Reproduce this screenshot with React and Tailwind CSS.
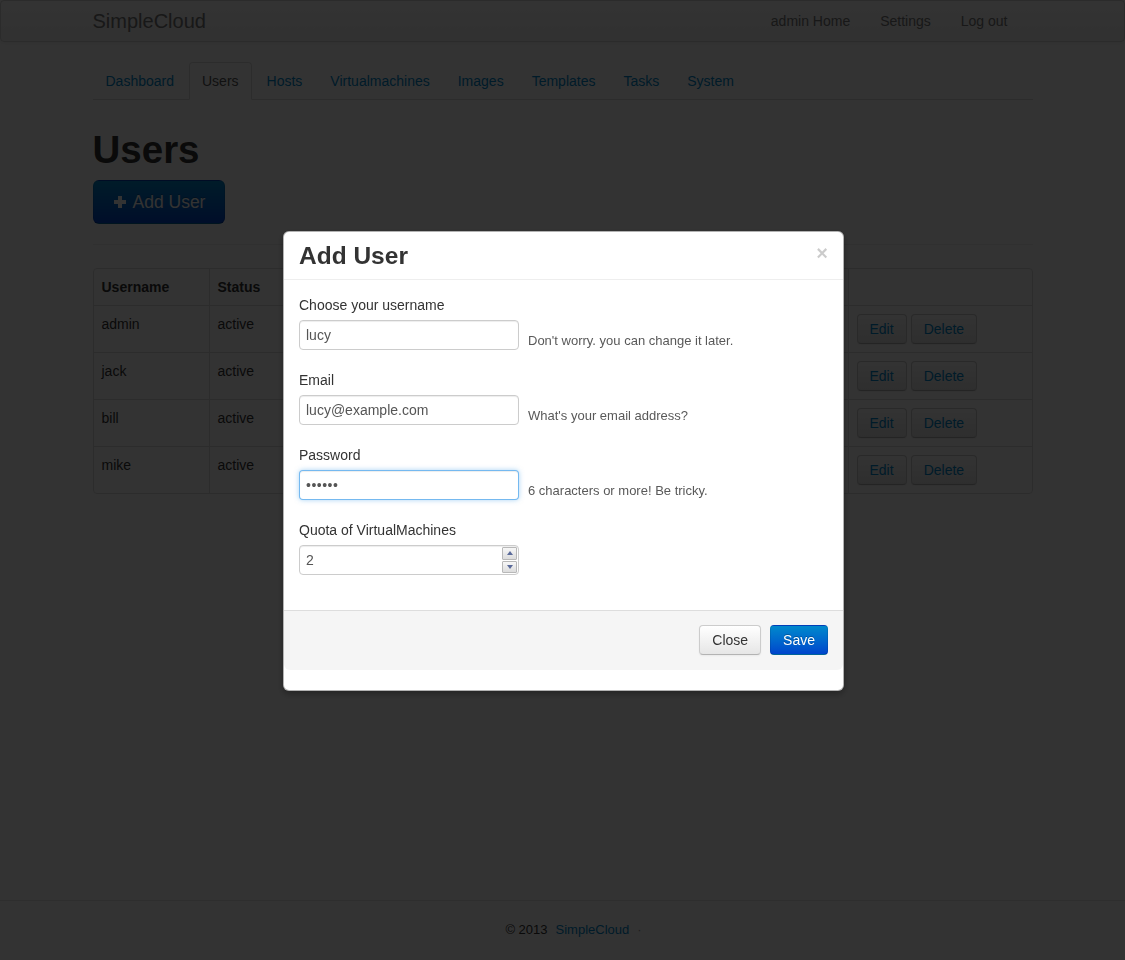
import React from "react";

const FONT = { fontFamily: '"Liberation Sans", Arial, Helvetica, sans-serif' };

const tabs = ["Dashboard", "Users", "Hosts", "Virtualmachines", "Images", "Templates", "Tasks", "System"];

const users = [
  { name: "admin", status: "active", email: "admin@example.com", quota: "10", created: "2013-01-02" },
  { name: "jack", status: "active", email: "jack@example.com", quota: "4", created: "2013-02-11" },
  { name: "bill", status: "active", email: "bill@example.com", quota: "4", created: "2013-03-05" },
  { name: "mike", status: "active", email: "mike@example.com", quota: "2", created: "2013-03-20" },
];

function SmallBtn({ children }) {
  return (
    <button className="px-[12px] py-[4px] text-[14px] leading-[20px] text-[#08c] rounded-[4px] border border-[#ccc] border-b-[#b3b3b3] bg-gradient-to-b from-white to-[#e6e6e6] shadow-[inset_0_1px_0_rgba(255,255,255,0.2),0_1px_2px_rgba(0,0,0,0.05)]">
      {children}
    </button>
  );
}

function Field({ label, help, children }) {
  return (
    <div className="mb-[20px]">
      <div className="text-[14px] leading-[20px] text-[#333] mb-[5px]">{label}</div>
      <div className="flex items-start h-[30px]">
        {children}
        {help && <span className="pl-[9px] pt-[11px] text-[13px] leading-[19px] text-[#595959]">{help}</span>}
      </div>
    </div>
  );
}

const inputCls =
  "w-[220px] h-[30px] px-[6px] py-[4px] text-[14px] leading-[20px] text-[#555] bg-white rounded-[4px] border outline-none";

export default function App() {
  return (
    <div style={FONT} className="min-h-screen flex flex-col bg-white text-[#333] text-[14px]">
      {/* navbar */}
      <div className="h-[42px] border border-[#d4d4d4] rounded-[4px] bg-gradient-to-b from-white to-[#f2f2f2] shadow-[0_1px_4px_rgba(0,0,0,0.065)]">
        <div className="w-[940px] mx-auto flex items-center justify-between h-full">
          <span className="text-[20px] leading-[20px] text-[#777]">SimpleCloud</span>
          <div className="flex mr-[10px]">
            {["admin Home", "Settings", "Log out"].map((l) => (
              <a key={l} className="px-[15px] py-[10px] leading-[20px] text-[#777]">{l}</a>
            ))}
          </div>
        </div>
      </div>

      <div className="w-[940px] mx-auto">
        {/* tabs */}
        <ul className="mt-[20px] flex border-b border-[#ddd]">
          {tabs.map((t) =>
            t === "Users" ? (
              <li key={t} className="mr-[2px] -mb-px px-[12px] py-[8px] leading-[20px] text-[#555] bg-white border border-[#ddd] border-b-transparent rounded-t-[4px]">{t}</li>
            ) : (
              <li key={t} className="mr-[2px] -mb-px px-[12px] py-[8px] leading-[20px] text-[#08c] border border-transparent rounded-t-[4px]">{t}</li>
            )
          )}
        </ul>

        <h1 className="mt-[30px] text-[38.5px] leading-[40px] font-bold text-[#333]">Users</h1>

        <button className="mt-[10px] flex items-center gap-[6px] px-[19px] py-[11px] text-[17.5px] leading-[20px] text-white rounded-[6px] border border-black/10 border-b-black/25 bg-gradient-to-b from-[#08c] to-[#04c] [text-shadow:0_-1px_0_rgba(0,0,0,0.25)]">
          <svg width="14" height="14" viewBox="0 0 14 14"><path d="M5 1h4v4h4v4H9v4H5V9H1V5h4z" fill="white" /></svg>
          Add User
        </button>

        <hr className="mt-[20px] mb-[22px] border-t border-[#eee] border-b border-b-white" />

        <table className="w-full table-fixed border-separate border-spacing-0 border border-[#ddd] rounded-[4px] text-[14px]">
          <thead>
            <tr>
              <th className="w-[115px] p-[8px] leading-[20px] text-left font-bold">Username</th>
              <th className="w-[120px] p-[8px] leading-[20px] text-left font-bold border-l border-[#ddd]">Status</th>
              <th className="w-[260px] p-[8px] leading-[20px] text-left font-bold border-l border-[#ddd]">Email</th>
              <th className="w-[120px] p-[8px] leading-[20px] text-left font-bold border-l border-[#ddd]">Quota</th>
              <th className="w-[139px] p-[8px] leading-[20px] text-left font-bold border-l border-[#ddd]">Created</th>
              <th className="w-[184px] p-[8px] leading-[20px] text-left font-bold border-l border-[#ddd]"></th>
            </tr>
          </thead>
          <tbody>
            {users.map((u) => (
              <tr key={u.name}>
                <td className="p-[8px] leading-[20px] align-top border-t border-[#ddd]">{u.name}</td>
                <td className="p-[8px] leading-[20px] align-top border-t border-l border-[#ddd]">{u.status}</td>
                <td className="p-[8px] leading-[20px] align-top border-t border-l border-[#ddd]">{u.email}</td>
                <td className="p-[8px] leading-[20px] align-top border-t border-l border-[#ddd]">{u.quota}</td>
                <td className="p-[8px] leading-[20px] align-top border-t border-l border-[#ddd]">{u.created}</td>
                <td className="p-[8px] leading-[20px] align-top border-t border-l border-[#ddd]">
                  <div className="flex gap-[4px]">
                    <SmallBtn>Edit</SmallBtn>
                    <SmallBtn>Delete</SmallBtn>
                  </div>
                </td>
              </tr>
            ))}
          </tbody>
        </table>
      </div>

      {/* footer */}
      <footer className="mt-auto border-t border-[#e5e5e5] pt-[19px] pb-[20px] pl-[22px] text-center text-[13px] leading-[20px]">
        <span className="text-[#333]">© 2013</span>
        <a className="text-[#08c] ml-[8px]">SimpleCloud</a>
        <span className="text-[#999] ml-[8px]">·</span>
      </footer>

      {/* backdrop */}
      <div className="fixed inset-0 bg-black/80 z-10" />

      {/* modal */}
      <div className="fixed z-20 top-[231px] left-[283px] w-[561px] bg-white border border-black/30 rounded-[6px] shadow-[0_3px_7px_rgba(0,0,0,0.3)]">
        <div className="flex items-start justify-between px-[15px] pt-[9px] pb-[8px] border-b border-[#eee]">
          <h3 className="text-[24.5px] leading-[30px] font-bold text-[#333]">Add User</h3>
          <button className="mt-[2px] text-[20px] leading-[20px] font-bold text-black opacity-20">×</button>
        </div>

        <div className="p-[15px]">
          <Field label="Choose your username" help="Don't worry. you can change it later.">
            <input readOnly defaultValue="lucy" className={inputCls + " border-[#ccc] shadow-[inset_0_1px_1px_rgba(0,0,0,0.075)]"} />
          </Field>
          <Field label="Email" help="What's your email address?">
            <input readOnly defaultValue="lucy@example.com" className={inputCls + " border-[#ccc] shadow-[inset_0_1px_1px_rgba(0,0,0,0.075)]"} />
          </Field>
          <Field label="Password" help="6 characters or more! Be tricky.">
            <input type="password" readOnly defaultValue="secret" className={inputCls + " border-[rgba(82,168,236,0.8)] shadow-[inset_0_1px_1px_rgba(0,0,0,0.075),0_0_5px_rgba(82,168,236,0.5)] text-[10px] tracking-[0.5px]"} />
          </Field>
          <Field label="Quota of VirtualMachines">
            <div className="relative">
              <input readOnly defaultValue="2" className={inputCls + " border-[#ccc] shadow-[inset_0_1px_1px_rgba(0,0,0,0.075)]"} />
              <div className="absolute right-[2px] top-[2px] w-[15px] h-[26px] flex flex-col gap-px">
                <div className="flex-1 flex items-center justify-center border border-[#b8b8b8] bg-gradient-to-b from-[#f7f7f7] to-[#dcdcdc] rounded-[1px]">
                  <svg width="6" height="4" viewBox="0 0 6 4"><path d="M0 4L3 0L6 4Z" fill="#5a6a9a" /></svg>
                </div>
                <div className="flex-1 flex items-center justify-center border border-[#b8b8b8] bg-gradient-to-b from-[#f7f7f7] to-[#dcdcdc] rounded-[1px]">
                  <svg width="6" height="4" viewBox="0 0 6 4"><path d="M0 0L6 0L3 4Z" fill="#5a6a9a" /></svg>
                </div>
              </div>
            </div>
          </Field>
        </div>

        <div className="flex justify-end gap-[9px] px-[15px] pt-[14px] pb-[15px] bg-[#f5f5f5] border-t border-[#ddd] rounded-b-[6px]">
          <button className="px-[12px] py-[4px] text-[14px] leading-[20px] text-[#333] rounded-[4px] border border-[#ccc] border-b-[#b3b3b3] bg-gradient-to-b from-white to-[#e6e6e6] shadow-[inset_0_1px_0_rgba(255,255,255,0.2),0_1px_2px_rgba(0,0,0,0.05)]">
            Close
          </button>
          <button className="px-[12px] py-[4px] text-[14px] leading-[20px] text-white rounded-[4px] border border-black/10 border-b-black/25 bg-gradient-to-b from-[#08c] to-[#04c] [text-shadow:0_-1px_0_rgba(0,0,0,0.25)]">
            Save
          </button>
        </div>
        <div className="h-[20px]" />
      </div>
    </div>
  );
}
